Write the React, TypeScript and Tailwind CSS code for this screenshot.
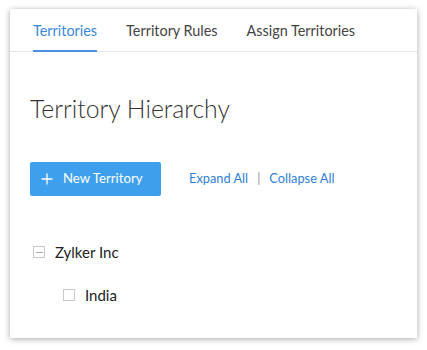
import React from "react";

export default function App() {
  const font = { fontFamily: "Lato, 'Open Sans', sans-serif" };
  return (
    <div className="w-[427px] h-[350px] bg-white" style={font}>
      <div className="absolute left-[10px] top-[9px] w-[407px] h-[329px] bg-white shadow-[0_1px_6px_rgba(0,0,0,0.35)]">
        <div className="flex h-[43px] border-b border-[#e6e6e6] pl-[23px] pt-[2px] gap-[29px] text-[14.4px]">
          <div className="relative flex items-center text-[#3a87dc]">
            Territories
            <div className="absolute left-0 right-0 bottom-[-1px] h-[2px] bg-[#4a90e2]" />
          </div>
          <div className="flex items-center text-[#444]">Territory Rules</div>
          <div className="flex items-center text-[#444]">Assign Territories</div>
        </div>
        <div className="pl-[20px]">
          <h1 className="mt-[41px] text-[24.8px] font-light text-[#333] leading-[32px]">Territory Hierarchy</h1>
          <div className="mt-[37px] flex items-center">
            <button className="flex items-center h-[34px] w-[131px] rounded-[2px] bg-[#3ea0ec] text-white text-[13.2px] pl-[11px]">
              <svg width="12" height="12" viewBox="0 0 12 12" className="mr-[10px]">
                <path d="M6 0.5V11.5M0.5 6H11.5" stroke="white" strokeWidth="1.3" />
              </svg>
              New Territory
            </button>
            <div className="ml-[28px] flex items-center text-[12.8px] text-[#2f7fd6]">
              <span>Expand All</span>
              <span className="mx-[9px] text-[#999]">|</span>
              <span>Collapse All</span>
            </div>
          </div>
          <div className="mt-[49px] flex items-center h-[14px]">
            <div className="ml-[3px] w-[12px] h-[12px] border border-[#c8c8c8] flex items-center justify-center">
              <div className="w-[7px] h-px bg-[#aaa]" />
            </div>
            <span className="ml-[10px] text-[15px] text-[#222]">Zylker Inc</span>
          </div>
          <div className="mt-[29px] flex items-center h-[14px]">
            <div className="ml-[33px] w-[12px] h-[12px] border border-[#c8c8c8]" />
            <span className="ml-[10px] text-[15px] text-[#222]">India</span>
          </div>
        </div>
      </div>
    </div>
  );
}
